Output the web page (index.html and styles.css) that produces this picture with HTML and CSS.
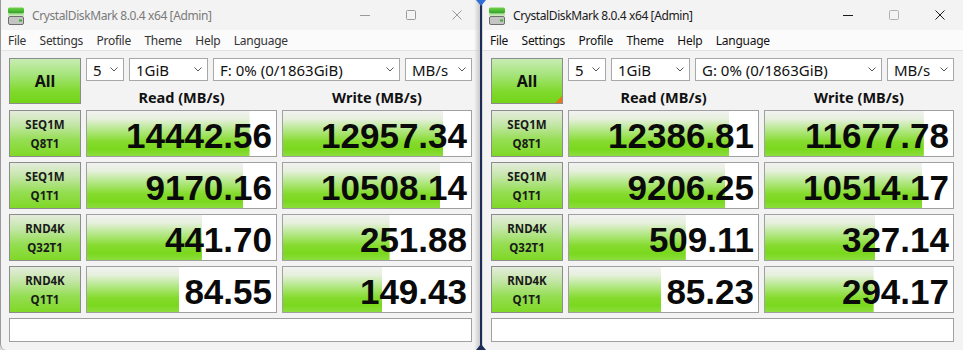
FILE: index.html
```html
<!DOCTYPE html>
<html>
<head>
<meta charset="utf-8">
<link rel="stylesheet" href="styles.css">
</head>
<body>
<div class="desk">
  <div class="win inactive">
    <div class="titlebar">
      <svg class="appicon" width="16" height="18" viewBox="0 0 16 18"><defs><linearGradient id="g1" x1="0" y1="0" x2="0" y2="1"><stop offset="0" stop-color="#6fd44a"/><stop offset="1" stop-color="#2f9f24"/></linearGradient></defs><rect x="0" y="0.5" width="16" height="6" rx="1.5" fill="url(#g1)"/><rect x="0" y="7" width="16" height="1.6" fill="#b5e39c"/><rect x="0.5" y="9.5" width="15" height="8" rx="1.5" fill="#c4c4c4" stroke="#6e6e6e"/><rect x="11" y="12.5" width="3" height="2" fill="#3caf2e"/></svg>
      <span class="title">CrystalDiskMark 8.0.4 x64 [Admin]</span>
      <div class="controls">
        <span class="ctl"><svg width="10" height="10" viewBox="0 0 10 10"><path d="M0 5.5h10" stroke="currentColor" stroke-width="1"/></svg></span>
        <span class="ctl dis"><svg width="10" height="10" viewBox="0 0 10 10"><rect x="0.5" y="0.5" width="9" height="9" rx="1" fill="none" stroke="currentColor"/></svg></span>
        <span class="ctl"><svg width="10" height="10" viewBox="0 0 10 10"><path d="M0.5 0.5l9 9M9.5 0.5l-9 9" stroke="currentColor" stroke-width="1"/></svg></span>
      </div>
    </div>
    <div class="menubar"><span>File</span><span>Settings</span><span>Profile</span><span>Theme</span><span>Help</span><span>Language</span></div>
    <div class="body">
      <div class="top">
        <div class="allbtn">All</div>
        <div class="topright">
          <div class="combos">
            <div class="combo c1"><span>5</span><svg class="chev" width="8" height="5" viewBox="0 0 8 5"><path d="M0.5 0.5l3.5 3.5 3.5-3.5" fill="none" stroke="#555" stroke-width="1"/></svg></div>
            <div class="combo c2"><span>1GiB</span><svg class="chev" width="8" height="5" viewBox="0 0 8 5"><path d="M0.5 0.5l3.5 3.5 3.5-3.5" fill="none" stroke="#555" stroke-width="1"/></svg></div>
            <div class="combo c3"><span>F: 0% (0/1863GiB)</span><svg class="chev" width="8" height="5" viewBox="0 0 8 5"><path d="M0.5 0.5l3.5 3.5 3.5-3.5" fill="none" stroke="#555" stroke-width="1"/></svg></div>
            <div class="combo c4"><span>MB/s</span><svg class="chev" width="8" height="5" viewBox="0 0 8 5"><path d="M0.5 0.5l3.5 3.5 3.5-3.5" fill="none" stroke="#555" stroke-width="1"/></svg></div>
          </div>
          <div class="heads"><span>Read (MB/s)</span><span>Write (MB/s)</span></div>
        </div>
      </div>
      <div class="rows">
        <div class="row"><div class="label"><span>SEQ1M</span><span>Q8T1</span></div><div class="cell" style="background-size:86% 100%">14442.56</div><div class="cell" style="background-size:85.2% 100%">12957.34</div></div>
        <div class="row"><div class="label"><span>SEQ1M</span><span>Q1T1</span></div><div class="cell" style="background-size:82.7% 100%">9170.16</div><div class="cell" style="background-size:83.7% 100%">10508.14</div></div>
        <div class="row"><div class="label"><span>RND4K</span><span>Q32T1</span></div><div class="cell" style="background-size:60.8% 100%">441.70</div><div class="cell" style="background-size:56.7% 100%">251.88</div></div>
        <div class="row"><div class="label"><span>RND4K</span><span>Q1T1</span></div><div class="cell" style="background-size:48.8% 100%">84.55</div><div class="cell" style="background-size:52.9% 100%">149.43</div></div>
      </div>
      <div class="comment"></div>
    </div>
  </div>
  <div class="win active">
    <div class="titlebar">
      <svg class="appicon" width="16" height="18" viewBox="0 0 16 18"><defs><linearGradient id="g2" x1="0" y1="0" x2="0" y2="1"><stop offset="0" stop-color="#6fd44a"/><stop offset="1" stop-color="#2f9f24"/></linearGradient></defs><rect x="0" y="0.5" width="16" height="6" rx="1.5" fill="url(#g2)"/><rect x="0" y="7" width="16" height="1.6" fill="#b5e39c"/><rect x="0.5" y="9.5" width="15" height="8" rx="1.5" fill="#c4c4c4" stroke="#6e6e6e"/><rect x="11" y="12.5" width="3" height="2" fill="#3caf2e"/></svg>
      <span class="title">CrystalDiskMark 8.0.4 x64 [Admin]</span>
      <div class="controls">
        <span class="ctl"><svg width="10" height="10" viewBox="0 0 10 10"><path d="M0 5.5h10" stroke="currentColor" stroke-width="1"/></svg></span>
        <span class="ctl dis"><svg width="10" height="10" viewBox="0 0 10 10"><rect x="0.5" y="0.5" width="9" height="9" rx="1" fill="none" stroke="currentColor"/></svg></span>
        <span class="ctl"><svg width="10" height="10" viewBox="0 0 10 10"><path d="M0.5 0.5l9 9M9.5 0.5l-9 9" stroke="currentColor" stroke-width="1"/></svg></span>
      </div>
    </div>
    <div class="menubar"><span>File</span><span>Settings</span><span>Profile</span><span>Theme</span><span>Help</span><span>Language</span></div>
    <div class="body">
      <div class="top">
        <div class="allbtn focus">All</div>
        <div class="topright">
          <div class="combos">
            <div class="combo c1"><span>5</span><svg class="chev" width="8" height="5" viewBox="0 0 8 5"><path d="M0.5 0.5l3.5 3.5 3.5-3.5" fill="none" stroke="#555" stroke-width="1"/></svg></div>
            <div class="combo c2"><span>1GiB</span><svg class="chev" width="8" height="5" viewBox="0 0 8 5"><path d="M0.5 0.5l3.5 3.5 3.5-3.5" fill="none" stroke="#555" stroke-width="1"/></svg></div>
            <div class="combo c3"><span>G: 0% (0/1863GiB)</span><svg class="chev" width="8" height="5" viewBox="0 0 8 5"><path d="M0.5 0.5l3.5 3.5 3.5-3.5" fill="none" stroke="#555" stroke-width="1"/></svg></div>
            <div class="combo c4"><span>MB/s</span><svg class="chev" width="8" height="5" viewBox="0 0 8 5"><path d="M0.5 0.5l3.5 3.5 3.5-3.5" fill="none" stroke="#555" stroke-width="1"/></svg></div>
          </div>
          <div class="heads"><span>Read (MB/s)</span><span>Write (MB/s)</span></div>
        </div>
      </div>
      <div class="rows">
        <div class="row"><div class="label"><span>SEQ1M</span><span>Q8T1</span></div><div class="cell" style="background-size:84.9% 100%">12386.81</div><div class="cell" style="background-size:84.5% 100%">11677.78</div></div>
        <div class="row"><div class="label"><span>SEQ1M</span><span>Q1T1</span></div><div class="cell" style="background-size:82.7% 100%">9206.25</div><div class="cell" style="background-size:83.7% 100%">10514.17</div></div>
        <div class="row"><div class="label"><span>RND4K</span><span>Q32T1</span></div><div class="cell" style="background-size:61.8% 100%">509.11</div><div class="cell" style="background-size:58.6% 100%">327.14</div></div>
        <div class="row"><div class="label"><span>RND4K</span><span>Q1T1</span></div><div class="cell" style="background-size:48.8% 100%">85.23</div><div class="cell" style="background-size:57.8% 100%">294.17</div></div>
      </div>
      <div class="comment"></div>
    </div>
  </div>
  <div class="divider"><span class="tri-top"></span><span class="tri-bot"></span></div>
</div>
</body>
</html>
```
FILE: styles.css
```css
html, body { margin: 0; padding: 0; }
body { width: 963px; height: 350px; overflow: hidden; background: #dcdcdc; font-family: "Noto Sans", "Liberation Sans", sans-serif; }
.desk { display: flex; position: relative; height: 350px; }
.win { position: relative; height: 350px; background: #f3f3f3; box-sizing: border-box; overflow: hidden; }
.win.inactive { width: 481px; border-left: 1px solid #9a9a9a; border-bottom-left-radius: 6px; }
.win.inactive::after { content: ""; position: absolute; right: 0; top: 0; bottom: 0; width: 7px; background: linear-gradient(to right, rgba(200,200,200,0), #c2c2c2); }
.win.active { width: 482px; border-left: 2px solid #d6d6d6; }
.titlebar { height: 30px; display: flex; align-items: center; background: #f3f3f3; }
.appicon { margin-left: 7px; margin-top: 1px; flex: none; }
.active .appicon { margin-left: 6px; }
.title { margin-left: 8px; font-size: 12px; letter-spacing: -0.4px; color: #7a7a7a; }
.active .title { color: #1b1b1b; }
.controls { margin-left: auto; display: flex; height: 30px; }
.ctl { width: 46px; display: flex; align-items: center; justify-content: center; color: #9a9a9a; }
.active .ctl { color: #1b1b1b; }
.active .ctl.dis { color: #b0b0b0; }
.inactive .controls { margin-right: 1px; }
.menubar { height: 20px; display: flex; align-items: center; gap: 13.5px; padding-left: 7px; background: #fbfbfb; border-bottom: 1px solid #e2e2e2; font-size: 12px; letter-spacing: -0.28px; color: #333; }
.active .menubar { color: #111; }
.body { padding: 7px 0 0 8px; }
.top { display: flex; gap: 5px; }
.allbtn { width: 72px; height: 46px; box-sizing: border-box; border: 1px solid #8c8c8c; background: linear-gradient(to bottom, #c8ecb4 0%, #a6e47c 35%, #7fd92a 75%, #74d41a 100%); display: flex; align-items: center; justify-content: center; font-weight: 700; font-size: 16px; color: #111; position: relative; }
.allbtn.focus::after { content: ""; position: absolute; right: 0; bottom: 0; width: 0; height: 0; border-style: solid; border-width: 0 0 7px 7px; border-color: transparent transparent #e8781c transparent; }
.topright { display: flex; flex-direction: column; }
.combos { display: flex; gap: 5px; height: 23px; }
.combo { box-sizing: border-box; height: 23px; border: 1px solid #a8a8a8; background: #fff; display: flex; align-items: center; padding: 0 5px 0 6px; font-size: 15px; color: #111; }
.combo span { flex: 1; line-height: 20px; white-space: nowrap; }
.chev { flex: none; }
.c1 { width: 38px; }
.c2 { width: 79px; }
.c3 { width: 187px; }
.c4 { width: 67px; }
.heads { display: grid; grid-template-columns: 191px 190px; column-gap: 5px; height: 23px; align-items: end; }
.heads span { text-align: center; font-weight: 700; font-size: 14.5px; color: #111; line-height: 14px; }
.rows { margin-top: 6px; display: flex; flex-direction: column; gap: 5px; }
.row { display: grid; grid-template-columns: 72px 191px 190px; column-gap: 5px; height: 47px; }
.label { box-sizing: border-box; border: 1px solid #8c8c8c; background: linear-gradient(to bottom, #e4ecdc 0%, #c4e6a8 30%, #94de52 65%, #80d826 100%); display: flex; flex-direction: column; align-items: center; justify-content: center; font-weight: 700; font-size: 11.5px; line-height: 19px; color: #1a1a1a; }
.cell { box-sizing: border-box; border: 1px solid #a0a0a0; background-color: #fff; background-image: linear-gradient(to bottom, #f2f2f2 0%, #e6f0dc 18%, #b4e888 42%, #86db2e 68%, #7ad81e 85%, #8cdd3c 100%); background-repeat: no-repeat; background-position: left top; display: flex; align-items: center; justify-content: flex-end; padding: 3px 4px 0 0; font-family: "Liberation Sans", Arial, sans-serif; font-weight: 700; font-size: 35px; line-height: 1; color: #0a0a0a; }
.comment { margin-top: 5px; width: 463px; height: 24px; box-sizing: border-box; border: 1px solid #a0a0a0; background: #fff; }
.divider { position: absolute; left: 480px; top: 0; width: 2px; height: 350px; background: #1e2c58; }
.tri-top { position: absolute; left: -4px; top: 0; width: 0; height: 0; border-style: solid; border-width: 6px 5px 0 5px; border-color: #2f6fd6 transparent transparent transparent; }
.tri-bot { position: absolute; left: -4px; bottom: 0; width: 0; height: 0; border-style: solid; border-width: 0 5px 6px 5px; border-color: transparent transparent #1e2c58 transparent; }
```
